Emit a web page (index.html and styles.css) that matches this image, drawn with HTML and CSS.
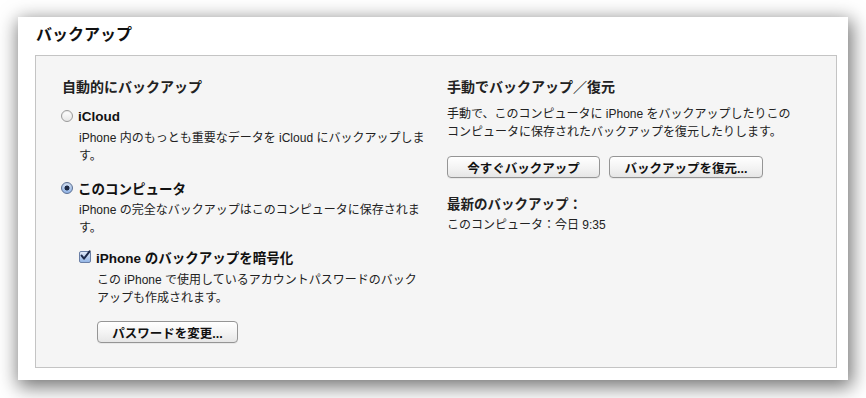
FILE: index.html
```html
<!DOCTYPE html>
<html lang="ja">
<head>
    <meta charset="UTF-8">
    <meta name="viewport" content="width=device-width, initial-scale=1.0">
    <title>バックアップ</title>
    <link rel="stylesheet" href="styles.css">
</head>
<body>
    <div class="window">
        <h1 class="title">バックアップ</h1>
        <div class="panel">
            <div class="column left">
                <h2 class="heading">自動的にバックアップ</h2>

                <label class="option">
                    <span class="radio"></span>
                    <span class="option-label">iCloud</span>
                </label>
                <p class="desc">iPhone 内のもっとも重要なデータを iCloud にバックアップします。</p>

                <label class="option option-computer">
                    <span class="radio checked"></span>
                    <span class="option-label">このコンピュータ</span>
                </label>
                <p class="desc">iPhone の完全なバックアップはこのコンピュータに保存されます。</p>

                <div class="sub">
                    <label class="option option-encrypt">
                        <span class="checkbox">
                            <svg viewBox="0 0 12 12" width="12" height="12">
                                <path d="M2.6 5.6 L5 8.6 L10.6 1.4" fill="none" stroke="#1d2a4a" stroke-width="2" stroke-linecap="round" stroke-linejoin="round"/>
                            </svg>
                        </span>
                        <span class="option-label">iPhone のバックアップを暗号化</span>
                    </label>
                    <p class="desc">この iPhone で使用しているアカウントパスワードのバックアップも作成されます。</p>
                    <button class="btn btn-password">パスワードを変更...</button>
                </div>
            </div>

            <div class="column right">
                <h2 class="heading">手動でバックアップ／復元</h2>
                <p class="desc desc-manual">手動で、このコンピュータに iPhone をバックアップしたりこのコンピュータに保存されたバックアップを復元したりします。</p>
                <div class="buttons">
                    <button class="btn btn-now">今すぐバックアップ</button>
                    <button class="btn btn-restore">バックアップを復元...</button>
                </div>
                <h3 class="latest-title">最新のバックアップ：</h3>
                <p class="latest">このコンピュータ：今日 9:35</p>
            </div>
        </div>
    </div>
</body>
</html>
```

FILE: styles.css
```css
body {
    margin: 0;
    padding: 17px 18px 18px;
    background: #ffffff;
    font-family: 'Liberation Sans', 'Noto Sans CJK JP', sans-serif;
    color: #1a1a1a;
}
.window {
    width: 830px;
    height: 363px;
    box-sizing: border-box;
    padding: 0 11px 12px 17px;
    background: #ffffff;
    box-shadow: 2px 5px 18px 2px rgba(0, 0, 0, 0.55);
    display: flex;
    flex-direction: column;
}
.title {
    margin: 0;
    height: 38px;
    line-height: 35px;
    padding-left: 1px;
    font-size: 16px;
    font-weight: bold;
    color: #111;
}
.panel {
    flex: 1;
    background: #f5f5f5;
    border: 1px solid #c4c4c4;
    display: flex;
    padding: 22px 0 0 26px;
}
.column.left {
    width: 366px;
}
.column.right {
    width: 344px;
    margin-left: 19px;
}
.heading {
    margin: 0;
    font-size: 14px;
    line-height: 18px;
    font-weight: bold;
    color: #222;
}
.option {
    display: flex;
    align-items: center;
    height: 20px;
    margin-top: 10px;
    margin-left: -1px;
}
.option-computer {
    margin-top: 13px;
}
.option-encrypt {
    margin-top: 10px;
}
.option-label {
    font-size: 13.5px;
    font-weight: bold;
    color: #111;
    margin-left: 5px;
}
.radio {
    width: 12px;
    height: 12px;
    box-sizing: border-box;
    border-radius: 50%;
    border: 1px solid #9a9a9a;
    background: linear-gradient(#ffffff, #e6e6e6);
    box-shadow: inset 0 1px 1px rgba(0, 0, 0, 0.08);
}
.radio.checked {
    border-color: #5b6f93;
    background: radial-gradient(circle, #1e2a44 0 2.2px, transparent 2.8px),
        linear-gradient(#d6e3f6, #8fb2e4);
}
.checkbox {
    width: 12px;
    height: 12px;
    box-sizing: border-box;
    border: 1px solid #6a7fa6;
    border-radius: 2px;
    background: linear-gradient(#dfe9f8, #94b6e6);
    display: flex;
    align-items: center;
    justify-content: center;
    overflow: visible;
}
.checkbox svg {
    flex: none;
    margin-top: -2px;
}
.desc {
    margin: 3px 0 0 17px;
    font-size: 12px;
    line-height: 18px;
    color: #222;
}
.sub {
    margin-left: 18px;
}
.sub .desc {
    margin-top: 4px;
    max-width: 326px;
}
.btn {
    font-family: 'Liberation Sans', 'Noto Sans CJK JP', sans-serif;
    font-size: 12.5px;
    font-weight: bold;
    color: #111;
    height: 22px;
    padding: 0;
    border: 1px solid #959595;
    border-radius: 4px;
    background: linear-gradient(#ffffff, #f3f3f3 55%, #e6e6e6);
    box-shadow: 0 1px 0 rgba(0, 0, 0, 0.05);
}
.btn-password {
    width: 141px;
    margin: 14px 0 0 17px;
}
.desc-manual {
    margin: 9px 0 0;
}
.buttons {
    display: flex;
    gap: 9px;
    margin-top: 15px;
}
.btn-now {
    width: 153px;
}
.btn-restore {
    width: 154px;
}
.latest-title {
    margin: 18px 0 0;
    font-size: 13.5px;
    line-height: 18px;
    font-weight: bold;
    color: #222;
}
.latest {
    margin: 2px 0 0;
    font-size: 12px;
    line-height: 18px;
    color: #222;
}
```
